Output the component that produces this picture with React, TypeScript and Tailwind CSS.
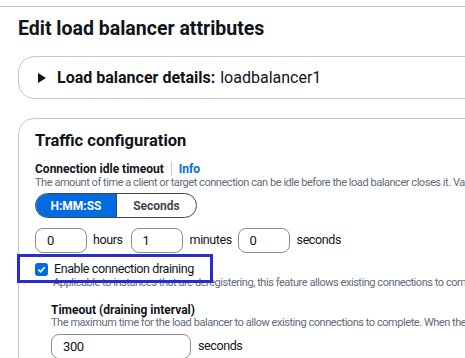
import React from "react";

const font = { fontFamily: 'Roboto, "Noto Sans", sans-serif' };

function Input({ value, w }: { value: string; w: string }) {
  return (
    <div className={`${w} h-[25px] border border-[#8c8c94] rounded-[8px] flex items-center px-[11px] text-[13px] text-[#0f141a]`}>
      {value}
    </div>
  );
}

export default function App() {
  return (
    <div className="relative w-[465px] h-[358px] overflow-hidden bg-white text-[#0f141a]" style={font}>
      <div className="mt-[6px] h-px bg-[#c6c6cd]" />
      <div className="mt-[10px] ml-[18px] text-[19.5px] leading-[24px] font-bold whitespace-nowrap">
        Edit load balancer attributes
      </div>
      <div className="mt-[15px] ml-[18px] w-[520px] h-[43px] border border-[#c6c6cd] rounded-[16px] flex items-center pl-[19px] whitespace-nowrap">
        <svg width="8" height="10" viewBox="0 0 8 10" className="mr-[11px]">
          <path d="M0 0 L8 5 L0 10 Z" fill="#0f141a" />
        </svg>
        <span className="text-[16px] font-bold">Load balancer details:</span>
        <span className="text-[16px] ml-[5px]">loadbalancer1</span>
      </div>
      <div className="mt-[19px] ml-[18px] w-[520px] h-[300px] border border-[#c6c6cd] rounded-[16px] pl-[16px] pt-[10px] whitespace-nowrap">
        <div className="text-[16.5px] leading-[24px] font-bold">Traffic configuration</div>
        <div className="mt-[9px] flex items-center h-[14px]">
          <span className="text-[12px] font-bold">Connection idle timeout</span>
          <span className="mx-[7px] w-px h-[14px] bg-[#c6c6cd]" />
          <span className="text-[12px] font-bold text-[#006ce0]">Info</span>
        </div>
        <div className="text-[11px] leading-[14px] text-[#5f6b7a] tracking-[-0.45px]">
          The amount of time a client or target connection can be idle before the load balancer closes it. Valid range is 1 second to 4000 seconds.
        </div>
        <div className="mt-[3px] inline-flex h-[25px] border-[1.5px] border-[#424650] rounded-full overflow-hidden text-[12px] font-bold">
          <div className="w-[80px] bg-[#006ce0] text-white flex items-center justify-center">H:MM:SS</div>
          <div className="w-[80px] border-l border-[#424650] text-[#424650] flex items-center justify-center">Seconds</div>
        </div>
        <div className="mt-[10px] flex items-center text-[12.5px] tracking-[-0.4px] text-[#0f141a]">
          <Input value="0" w="w-[52px]" />
          <span className="ml-[6px] mr-[8px]">hours</span>
          <Input value="1" w="w-[52px]" />
          <span className="ml-[7px] mr-[8px] w-[40px]">minutes</span>
          <Input value="0" w="w-[52px]" />
          <span className="ml-[7px]">seconds</span>
        </div>
        <div className="mt-[9px] flex items-center h-[14px]">
          <div className="w-[13px] h-[13px] rounded-[3px] bg-[#006ce0] flex items-center justify-center">
            <svg width="9" height="9" viewBox="0 0 10 10">
              <path d="M1.5 5.2 L4 7.6 L8.5 2.5" stroke="white" strokeWidth="1.8" fill="none" />
            </svg>
          </div>
          <span className="ml-[6px] text-[12.5px] tracking-[-0.4px]">Enable connection draining</span>
        </div>
        <div className="ml-[18px] text-[11px] leading-[14px] text-[#5f6b7a] tracking-[-0.45px]">
          Applicable to instances that are deregistering, this feature allows existing connections to complete before deregistration.
        </div>
        <div className="ml-[16px] mt-[13px] text-[12px] leading-[14px] font-bold">Timeout (draining interval)</div>
        <div className="ml-[16px] -mt-[1px] text-[11px] leading-[14px] text-[#5f6b7a] tracking-[-0.45px]">
          The maximum time for the load balancer to allow existing connections to complete. When the timeout is reached, connections are closed.
        </div>
        <div className="ml-[16px] mt-[4px] flex items-center text-[12.5px] tracking-[-0.4px]">
          <Input value="300" w="w-[140px]" />
          <span className="ml-[7px]">seconds</span>
        </div>
      </div>
      <div className="absolute left-[17px] top-[254px] w-[196px] h-[29px] border-[3px] border-[#2b2bd3]" />
    </div>
  );
}
